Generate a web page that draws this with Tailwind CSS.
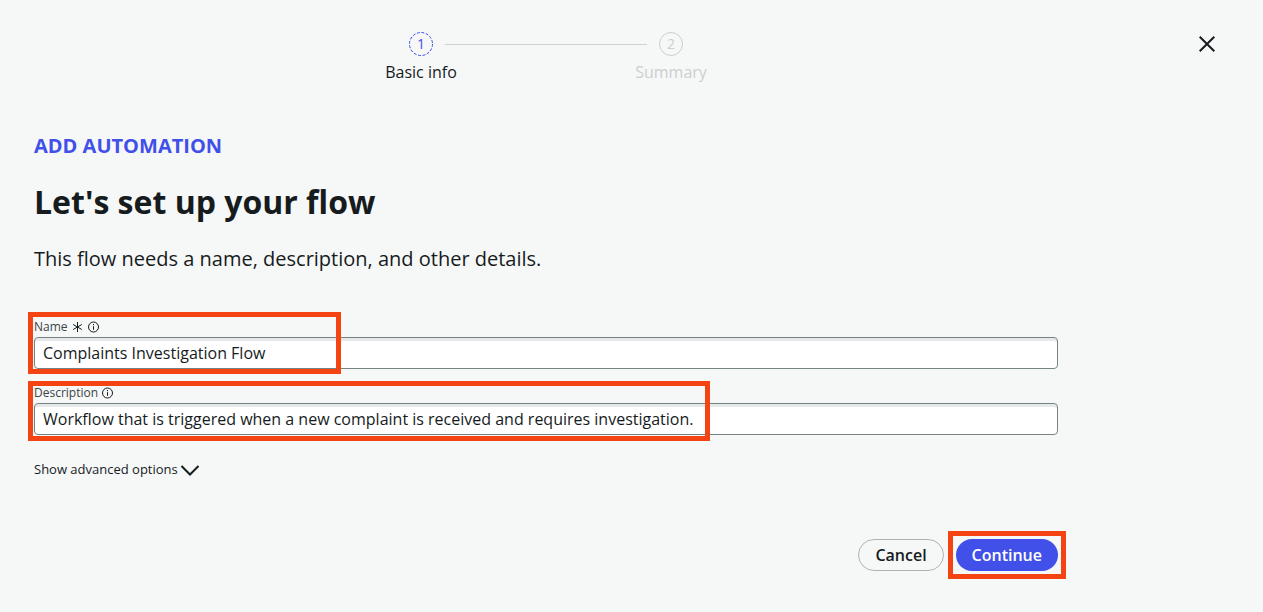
<!DOCTYPE html>
<html lang="en">
<head>
<meta charset="utf-8">
<meta name="viewport" content="width=device-width, initial-scale=1">
<title>Add automation</title>
<script src="https://cdn.jsdelivr.net/npm/@tailwindcss/browser@4"></script>
</head>
<body class="relative min-h-screen bg-[#f6f8f8] font-['Open_Sans','Noto_Sans',sans-serif] text-[#161b1d]">
  <button type="button" aria-label="Close" class="absolute top-7 right-10 flex size-8 items-center justify-center">
    <svg class="size-4" viewBox="0 0 16 16" fill="none" stroke="currentColor" stroke-width="2" aria-hidden="true"><path d="M.7.7l14.6 14.6M15.3.7L.7 15.3"/></svg>
  </button>

  <main class="px-[34px] pt-8">
    <div class="max-w-5xl">
      <ol class="flex justify-center text-base leading-6">
        <li class="flex w-12 flex-col items-center gap-1">
          <span class="relative flex size-6 items-center justify-center text-sm text-[#3d4be6]">
            <svg class="absolute inset-0 size-6" viewBox="0 0 24 24" fill="none" stroke="currentColor" aria-hidden="true"><circle cx="12" cy="12" r="11.5" stroke-dasharray="2.9 1.62"/></svg>1</span>
          <span class="whitespace-nowrap">Basic info</span>
        </li>
        <li aria-hidden="true" class="mt-3 h-px w-[202px] bg-[#cfd2d2]"></li>
        <li class="flex w-12 flex-col items-center gap-1 text-[#cbcecf]">
          <span class="flex size-6 items-center justify-center rounded-full border border-current text-sm">2</span>
          <span class="whitespace-nowrap">Summary</span>
        </li>
      </ol>

      <p class="mt-12 text-xl leading-7 font-bold text-[#4150e8]">ADD AUTOMATION</p>
      <h1 class="mt-[22px] text-[32px] leading-10 font-bold">Let's set up your flow</h1>
      <p class="mt-[23px] text-xl leading-7">This flow needs a name, description, and other details.</p>

      <form class="mt-11">
        <div class="relative">
          <label for="name" class="flex h-5 items-center text-xs leading-5 text-[#3b4346]">Name
            <svg class="ml-1 size-3" viewBox="0 0 12 12" fill="none" stroke="#161b1d" role="img" aria-label="required"><path d="M5.500 1v10M1.200 3.500l8.600 5M9.800 3.500l-8.600 5"/></svg>
            <svg class="ml-1 size-3" viewBox="0 0 12 12" fill="none" stroke="#161b1d" aria-hidden="true"><circle cx="5.500" cy="6" r="5"/><path d="M5.500 5.200v3.600M5.500 3v1.200"/></svg>
          </label>
          <input id="name" type="text" required value="Complaints Investigation Flow" class="block h-8 w-full rounded-sm border border-[#748485] bg-white px-2 text-base leading-6 shadow-[inset_0_3px_0_#e6e8e9] outline-none">
          <div class="pointer-events-none absolute -top-[5px] -bottom-[5px] -left-[6px] w-[313px] border-5 border-[#f54414]"></div>
        </div>

        <div class="relative mt-3.5">
          <label for="description" class="flex h-5 items-center text-xs leading-5 text-[#3b4346]">Description
            <svg class="ml-1 size-3" viewBox="0 0 12 12" fill="none" stroke="#161b1d" aria-hidden="true"><circle cx="5.500" cy="6" r="5"/><path d="M5.500 5.200v3.600M5.500 3v1.200"/></svg>
          </label>
          <input id="description" type="text" value="Workflow that is triggered when a new complaint is received and requires investigation." class="block h-8 w-full rounded-sm border border-[#748485] bg-white px-2 text-base leading-6 shadow-[inset_0_3px_0_#e6e8e9] outline-none">
          <div class="pointer-events-none absolute -top-[2px] -bottom-[6px] -left-[6px] w-[682px] border-5 border-[#f54414]"></div>
        </div>

        <button type="button" class="mt-6 flex items-center gap-0.5 text-[13px] leading-5">Show advanced options
          <svg class="mt-0.5 h-3 w-5" viewBox="0 0 20 12" fill="none" stroke="currentColor" stroke-width="2" aria-hidden="true"><path d="M1.500 2L10 10.500 18.500 2"/></svg>
        </button>

        <div class="mt-15 flex justify-end gap-3 text-base leading-6 font-semibold">
          <button type="button" class="h-8 rounded-full border border-[#abb5b5] px-4">Cancel</button>
          <div class="relative">
            <button type="submit" class="h-8 rounded-full bg-[#4150e8] px-4 text-white">Continue</button>
            <div class="pointer-events-none absolute -inset-2 border-5 border-[#f54414]"></div>
          </div>
        </div>
      </form>
    </div>
  </main>
</body>
</html>
